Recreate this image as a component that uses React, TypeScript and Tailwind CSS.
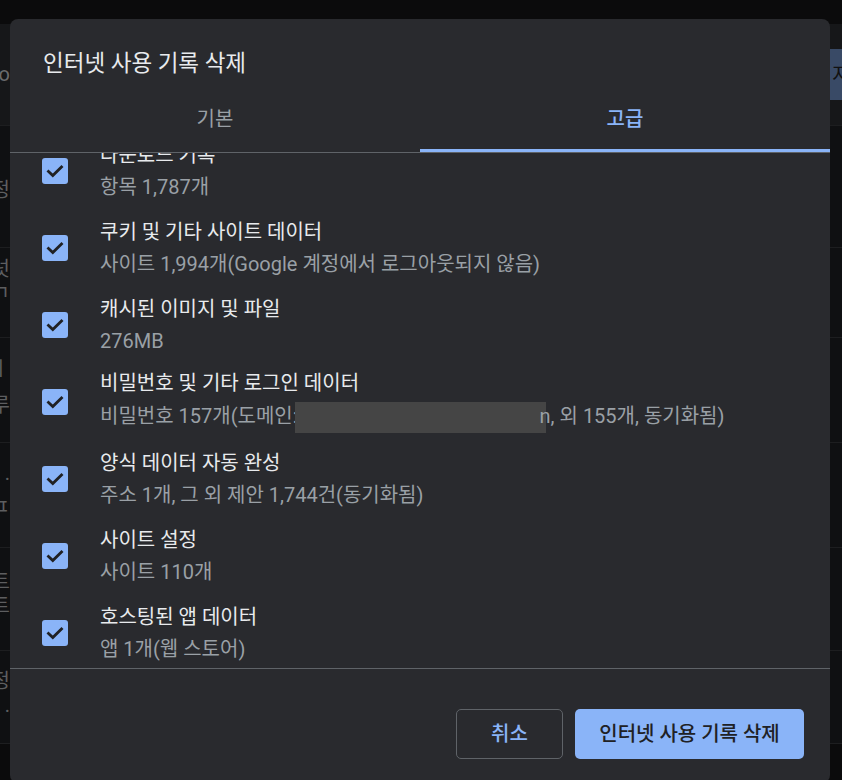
import React from "react";

const items = [
  { title: "다운로드 기록", sub: "항목 1,787개" },
  { title: "쿠키 및 기타 사이트 데이터", sub: "사이트 1,994개(Google 계정에서 로그아웃되지 않음)" },
  { title: "캐시된 이미지 및 파일", sub: "276MB" },
  { title: "비밀번호 및 기타 로그인 데이터", sub: "", redacted: true },
  { title: "양식 데이터 자동 완성", sub: "주소 1개, 그 외 제안 1,744건(동기화됨)" },
  { title: "사이트 설정", sub: "사이트 110개" },
  { title: "호스팅된 앱 데이터", sub: "앱 1개(웹 스토어)" },
];

// page rows that peek out at the left edge behind the dialog
const bgRows = [
  { h: "h-[122px]", marks: [{ t: "정", pt: "pt-[52px]" }] },
  { h: "h-[90px]", marks: [{ t: "넛", pt: "pt-[9px]" }, { t: "ㄱ", pt: "pt-0" }] },
  { h: "h-[105px]", marks: [{ t: "ㅣ", pt: "pt-[19px]" }, { t: "루", pt: "pt-[12px]" }] },
  { h: "h-[105px]", marks: [{ t: ".", pt: "pt-[18px]" }, { t: "ㅍ", pt: "pt-[10px]" }] },
  { h: "h-[103px]", marks: [{ t: "트", pt: "pt-[22px]" }, { t: "트", pt: "pt-0" }] },
  { h: "h-[93px]", marks: [{ t: "정", pt: "pt-[18px]" }, { t: ".", pt: "pt-0" }] },
];

function Check() {
  return (
    <div className="w-[26px] h-[26px] shrink-0 rounded-[3px] bg-[#8ab4f8] flex items-center justify-center">
      <svg width="26" height="26" viewBox="0 0 26 26">
        <path d="M6.5 13.5 L10.8 17.6 L19.5 8.9" fill="none" stroke="#202124" strokeWidth="2.8" strokeLinecap="square" />
      </svg>
    </div>
  );
}

export default function App() {
  return (
    <div
      className="relative w-[842px] h-[780px] overflow-hidden bg-[#0f1012]"
      style={{ fontFamily: "Roboto, 'Noto Sans CJK KR', sans-serif" }}
    >
      {/* page behind the dialog */}
      <div className="flex flex-col">
        <div className="h-[24px] bg-[#0b0b0c]" />
        <div className="h-[101px] bg-[#161719] flex items-start justify-between">
          <div className="w-[10px] overflow-hidden flex justify-end pt-[38px] text-[20px] leading-[24px] text-[#6a6b6d]">o</div>
          <div className="mt-[25px] h-[51px] w-[12px] overflow-hidden bg-[#394a66] flex items-center pl-[2px] text-[20px] text-[#111] whitespace-nowrap">
            지
          </div>
        </div>
        {bgRows.map((r, i) => (
          <div key={i} className={`${r.h} border-t border-[#1d1e20] flex flex-col`}>
            {r.marks.map((m, j) => (
              <div
                key={j}
                className={`${m.pt} w-[10px] overflow-hidden flex justify-end text-[20px] leading-[24px] text-[#5d5e60] whitespace-nowrap`}
              >
                {m.t}
              </div>
            ))}
          </div>
        ))}
        <div className="h-[40px] border-t border-[#1d1e20] bg-[#0b0b0c]" />
      </div>

      {/* dialog */}
      <div className="absolute left-[10px] top-[19px] w-[820px] rounded-[8px] bg-[#292a2e] flex flex-col pb-[24px]">
        <h1 className="pl-[33px] pt-[31px] text-[22.5px] leading-[26px] text-[#e8eaed] font-normal">
          인터넷 사용 기록 삭제
        </h1>

        <div className="flex border-b border-[#5f6368]">
          <div className="flex-1 pt-[31px] pb-[18px] border-b-[3px] border-transparent text-center text-[20px] leading-[24px] text-[#9aa0a6]">
            기본
          </div>
          <div className="flex-1 pt-[31px] pb-[18px] border-b-[3px] border-[#8ab4f8] text-center text-[20px] leading-[24px] text-[#8ab4f8] font-medium">
            고급
          </div>
        </div>

        <div className="h-[515px] overflow-hidden">
          <div className="-mt-[21px] flex flex-col">
            {items.map((it) => (
              <div key={it.title} className="h-[77px] flex items-center pl-[32px]">
                <Check />
                <div className="pl-[32px] flex flex-col">
                  <div className="text-[20px] leading-[26px] text-[#e8eaed]">{it.title}</div>
                  <div className="mt-[6px] text-[20px] leading-[26px] text-[#9aa0a6] whitespace-nowrap">
                    {it.redacted ? (
                      <>
                        비밀번호 157개(도메인:
                        <span className="inline-block align-middle -ml-[3px] -mr-[6px] w-[251px] h-[31px] bg-[#454545]" />
                        n, 외 155개, 동기화됨)
                      </>
                    ) : (
                      it.sub
                    )}
                  </div>
                </div>
              </div>
            ))}
          </div>
        </div>

        <div className="border-t border-[#5f6368] flex justify-end gap-[12px] pt-[40px] pr-[26px]">
          <button className="w-[107px] h-[50px] rounded-[5px] border border-[#5f6368] text-[20px] font-medium text-[#8ab4f8]">
            취소
          </button>
          <button className="w-[229px] h-[50px] rounded-[5px] bg-[#8ab4f8] text-[20px] font-medium text-[#202124]">
            인터넷 사용 기록 삭제
          </button>
        </div>
      </div>
    </div>
  );
}
